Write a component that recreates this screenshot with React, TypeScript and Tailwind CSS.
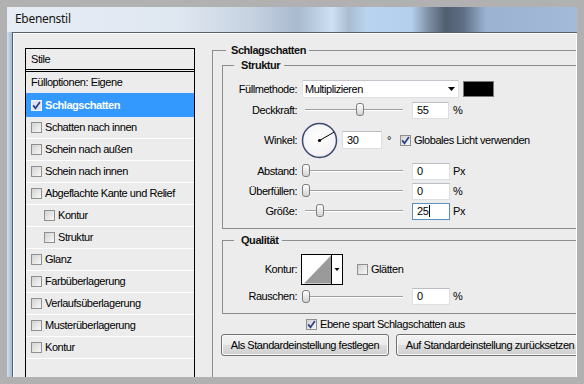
import React from "react";

const Check = ({ checked = false, onBlue = false }: { checked?: boolean; onBlue?: boolean }) => (
  <span
    className={
      onBlue
        ? "flex h-[11px] w-[11px] shrink-0 items-center justify-center border border-[#eef4fb] bg-[#dfe5ee]"
        : "flex h-[11px] w-[11px] shrink-0 items-center justify-center border border-[#8e8f8f] bg-[linear-gradient(135deg,#d2d2d2,#f8f8f8)]"
    }
  >
    {checked && (
      <svg width="9" height="9" viewBox="0 0 9 9">
        <path d="M1.2 4.4 L3.5 7.3 L7.9 1.1" fill="none" stroke="#2e3f82" strokeWidth="1.7" />
      </svg>
    )}
  </span>
);

const Slider = ({ pos }: { pos: number }) => (
  <div className="relative ml-[5px] flex h-[14px] w-[104px] shrink-0 items-center px-[3px]">
    <div className="h-[2px] w-full border-t border-[#9f9f9f] bg-white" />
    <div
      className="absolute top-[0px] h-[13px] w-[8px] rounded-[3px] border border-[#7d7d7d] bg-[linear-gradient(to_bottom,#ffffff,#d2d2d2)]"
      style={{ left: pos }}
    />
  </div>
);

const Field = ({ value, focus = false, w = "w-[38px]" }: { value: string; focus?: boolean; w?: string }) => (
  <div
    className={
      (focus
        ? "border-[#5a8fc4] "
        : "border-[#dcdfe4] border-t-[#b9bcc2] ") +
      "ml-[6px] flex h-[17px] shrink-0 items-center border bg-white pl-[4px] " +
      w
    }
  >
    <span>{value}</span>
    {focus && <span className="ml-[1px] h-[12px] w-px bg-black" />}
  </div>
);

const Label = ({ children }: { children: React.ReactNode }) => (
  <div className="w-[74px] shrink-0 text-right">{children}</div>
);

const listItems: { label: string; indent?: boolean }[] = [
  { label: "Schatten nach innen" },
  { label: "Schein nach außen" },
  { label: "Schein nach innen" },
  { label: "Abgeflachte Kante und Relief" },
  { label: "Kontur", indent: true },
  { label: "Struktur", indent: true },
  { label: "Glanz" },
  { label: "Farbüberlagerung" },
  { label: "Verlaufsüberlagerung" },
  { label: "Musterüberlagerung" },
  { label: "Kontur" },
];

export default function App() {
  return (
    <div className="h-[384px] w-[584px] overflow-hidden bg-[#b1b1b1] p-[7px] font-['Liberation_Sans',Arial,sans-serif] text-[11px] leading-[13px] tracking-[-0.45px] text-black">
      <div className="flex h-[370px] w-[570px] flex-col">
        {/* title bar */}
        <div className="flex h-[25px] shrink-0 items-center bg-[linear-gradient(to_right,#e7edf5_0%,#dfe7f1_30%,#c6d2e1_43%,#a9bacf_51%,#cde0f4_57%,#abbccf_60%,#b9d4f0_63%,#b3cfec_71%,#7e8ea3_74%,#505e70_77%,#5e6e84_80%,#9bb3d0_84%,#a3bbd8_100%)] pb-[3px] pl-[8px] font-['Noto_Sans',sans-serif] text-[12px] tracking-[-0.3px] text-[#151515]">
          Ebenenstil
        </div>
        <div className="flex min-h-0 flex-1">
          <div className="w-[5px] shrink-0 bg-[linear-gradient(to_right,#d3dfed,#a3b9d4)]" />
          <div className="min-w-0 flex-1 border-l border-t border-[#56606e]">
            <div className="flex h-full items-start overflow-hidden border-l border-r border-t border-white bg-[#ececec]">
              {/* left list */}
              <div className="ml-[11px] mt-[14px] flex w-[170px] shrink-0 flex-col self-stretch border-l border-r border-t border-black">
                <div className="flex h-[20px] items-center pl-[5px]">Stile</div>
                <div className="h-[3px] border-b border-t border-black" />
                <div className="flex h-[21px] items-center pl-[5px]">Fülloptionen: Eigene</div>
                <div className="flex h-[24px] items-center bg-[#3399ff] pl-[5px] font-bold text-white">
                  <Check checked onBlue />
                  <span className="ml-[3px]">Schlagschatten</span>
                </div>
                {listItems.map((it, i) => (
                  <div
                    key={i}
                    className={
                      it.indent
                        ? "flex h-[22px] shrink-0 items-center border-b border-white pl-[18px]"
                        : "flex h-[22px] shrink-0 items-center border-b border-white pl-[5px]"
                    }
                  >
                    <Check />
                    <span className="ml-[3px]">{it.label}</span>
                  </div>
                ))}
              </div>

              {/* right panel */}
              <div className="ml-[17px] mt-[10px] w-[380px] shrink-0">
                <fieldset className="h-[400px] border-l border-t border-[#8d8d8d]">
                  <legend className="ml-[13px] pl-[5px] pr-[3px] font-bold leading-[13px] text-[#111]">
                    Schlagschatten
                  </legend>

                  {/* Struktur */}
                  <fieldset className="ml-[9px] mt-[2px] w-[370px] border-b border-l border-t border-[#8d8d8d] pb-[8px]">
                    <legend className="ml-[11px] pl-[7px] pr-[4px] font-bold leading-[13px] text-[#111]">
                      Struktur
                    </legend>
                    <div className="mt-[8px] flex h-[18px] items-center">
                      <Label>Füllmethode:</Label>
                      <div className="ml-[5px] flex h-[18px] w-[157px] shrink-0 items-center justify-between border border-[#dfe1e5] border-t-[#c3c6cc] bg-white pl-[2px] pr-[3px]">
                        <span>Multiplizieren</span>
                        <svg width="7" height="4" viewBox="0 0 7 4">
                          <polygon points="0,0 7,0 3.5,4" fill="#000" />
                        </svg>
                      </div>
                      <div className="ml-[4px] h-[16px] w-[31px] shrink-0 border border-[#7a7a7a] bg-black" />
                    </div>
                    <div className="mt-[4px] flex h-[16px] items-center">
                      <Label>Deckkraft:</Label>
                      <Slider pos={54} />
                      <Field value="55" w="w-[37px]" />
                      <span className="ml-[4px]">%</span>
                    </div>
                    <div className="mt-[3px] flex h-[38px] items-center">
                      <Label>Winkel:</Label>
                      <svg className="ml-[4px] shrink-0" width="37" height="37" viewBox="0 0 37 37">
                        <defs>
                          <radialGradient id="dialg" cx="45%" cy="40%" r="65%">
                            <stop offset="0" stopColor="#ffffff" />
                            <stop offset="0.8" stopColor="#f3f3f5" />
                            <stop offset="1" stopColor="#d9dbe2" />
                          </radialGradient>
                        </defs>
                        <circle cx="18.5" cy="18.5" r="17" fill="url(#dialg)" stroke="#3d4872" strokeWidth="1.5" />
                        <line x1="18.5" y1="18.5" x2="33" y2="10.2" stroke="#000" strokeWidth="1" />
                        <circle cx="18.5" cy="18.5" r="1.6" fill="#000" />
                      </svg>
                      <div className="ml-[4px] flex h-[18px] w-[40px] shrink-0 items-center border border-[#dcdfe4] border-t-[#b9bcc2] bg-white pl-[4px]">
                        30
                      </div>
                      <span className="ml-[5px]">°</span>
                      <div className="ml-[9px]">
                        <Check checked />
                      </div>
                      <span className="ml-[3px]">Globales Licht verwenden</span>
                    </div>
                    <div className="mt-[3px] flex h-[18px] items-center">
                      <Label>Abstand:</Label>
                      <Slider pos={0} />
                      <Field value="0" />
                      <span className="ml-[3px]">Px</span>
                    </div>
                    <div className="mt-[2px] flex h-[18px] items-center">
                      <Label>Überfüllen:</Label>
                      <Slider pos={0} />
                      <Field value="0" />
                      <span className="ml-[3px]">%</span>
                    </div>
                    <div className="mt-[2px] flex h-[18px] items-center">
                      <Label>Größe:</Label>
                      <Slider pos={14} />
                      <Field value="25" focus />
                      <span className="ml-[3px]">Px</span>
                    </div>
                  </fieldset>

                  {/* Qualität */}
                  <fieldset className="ml-[9px] mt-[5px] w-[370px] border-b border-l border-t border-[#8d8d8d] pb-[8px]">
                    <legend className="ml-[11px] pl-[7px] pr-[4px] font-bold leading-[13px] text-[#111]">
                      Qualität
                    </legend>
                    <div className="mt-[7px] flex h-[31px] items-center">
                      <Label>Kontur:</Label>
                      <svg className="ml-[4px] shrink-0" width="42" height="31" viewBox="0 0 42 31">
                        <rect x="0.5" y="0.5" width="41" height="30" fill="#fff" stroke="#000" />
                        <polygon points="3,29.5 30,1.5 30,29.5" fill="#9a9a9a" />
                        <line x1="30.5" y1="0" x2="30.5" y2="31" stroke="#000" />
                        <polygon points="33.5,14 38.5,14 36,17" fill="#000" />
                      </svg>
                      <div className="ml-[14px]">
                        <Check />
                      </div>
                      <span className="ml-[3px]">Glätten</span>
                    </div>
                    <div className="mt-[3px] flex h-[17px] items-center">
                      <Label>Rauschen:</Label>
                      <Slider pos={0} />
                      <Field value="0" />
                      <span className="ml-[3px]">%</span>
                    </div>
                  </fieldset>

                  <div className="mt-[4px] flex h-[12px] items-center pl-[93px]">
                    <Check checked />
                    <span className="ml-[3px]">Ebene spart Schlagschatten aus</span>
                  </div>

                  <div className="mt-[4px] flex h-[22px] items-stretch">
                    <div className="ml-[8px] flex w-[168px] shrink-0 items-center justify-center rounded-[3px] border border-[#707070] bg-[linear-gradient(to_bottom,#f3f3f3_0%,#ebebeb_50%,#dddddd_51%,#d0d0d0_100%)] shadow-[inset_0_0_0_1px_#fbfbfb]">
                      Als Standardeinstellung festlegen
                    </div>
                    <div className="ml-[7px] flex w-[188px] shrink-0 items-center justify-center rounded-[3px] border border-[#707070] bg-[linear-gradient(to_bottom,#f3f3f3_0%,#ebebeb_50%,#dddddd_51%,#d0d0d0_100%)] shadow-[inset_0_0_0_1px_#fbfbfb]">
                      Auf Standardeinstellung zurücksetzen
                    </div>
                  </div>
                </fieldset>
              </div>
            </div>
          </div>
        </div>
      </div>
    </div>
  );
}
